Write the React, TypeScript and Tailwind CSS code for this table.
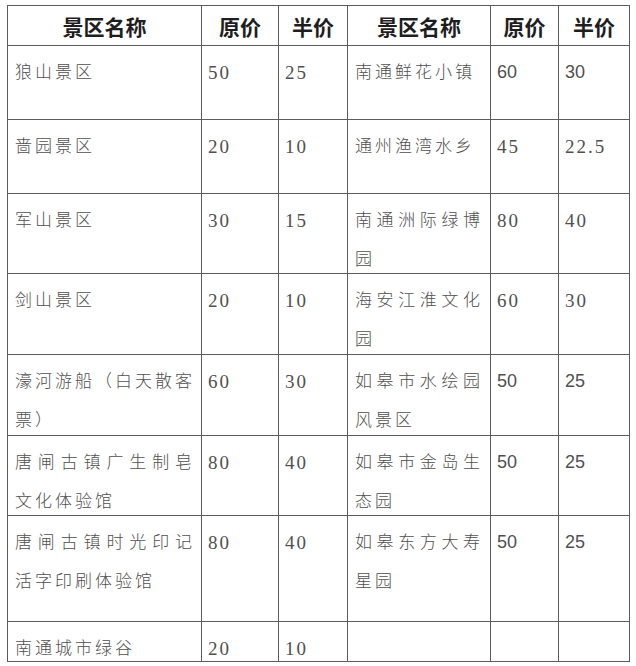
type Cell = { lines: string[]; a: string; b: string; sans?: boolean };

const rows: { h: number; left: Cell; right: Cell | null }[] = [
  { h: 74, left: { lines: ["狼山景区"], a: "50", b: "25" }, right: { lines: ["南通鲜花小镇"], a: "60", b: "30", sans: true } },
  { h: 74, left: { lines: ["啬园景区"], a: "20", b: "10" }, right: { lines: ["通州渔湾水乡"], a: "45", b: "22.5" } },
  { h: 80, left: { lines: ["军山景区"], a: "30", b: "15" }, right: { lines: ["南通洲际绿博", "园"], a: "80", b: "40" } },
  { h: 81, left: { lines: ["剑山景区"], a: "20", b: "10" }, right: { lines: ["海安江淮文化", "园"], a: "60", b: "30" } },
  { h: 81, left: { lines: ["濠河游船（白天散客", "票）"], a: "60", b: "30" }, right: { lines: ["如皋市水绘园", "风景区"], a: "50", b: "25", sans: true } },
  { h: 80, left: { lines: ["唐闸古镇广生制皂", "文化体验馆"], a: "80", b: "40" }, right: { lines: ["如皋市金岛生", "态园"], a: "50", b: "25", sans: true } },
  { h: 106, left: { lines: ["唐闸古镇时光印记", "活字印刷体验馆"], a: "80", b: "40" }, right: { lines: ["如皋东方大寿", "星园"], a: "50", b: "25", sans: true } },
  { h: 40, left: { lines: ["南通城市绿谷"], a: "20", b: "10" }, right: null },
];

const td = "border border-[#5c5c5c] align-top text-[#505050] text-[17px] tracking-[3px] p-0";
const serif = "font-['Liberation_Serif','Noto_Sans_CJK_SC',serif] font-light";
const sansNum = "font-['Liberation_Sans',sans-serif] tracking-normal text-[18px]";

// cell content is kept short (h-[24px]) so the row keeps its own height; text overflows downward
function Name({ lines, wide }: { lines: string[]; wide: boolean }) {
  return (
    <div className="h-[24px] pl-[7px] pt-[7px] leading-[39px]">
      {lines.map((l, i) =>
        i < lines.length - 1 ? (
          <div key={i} className={`${wide ? "w-[180px]" : "w-[128px]"} text-justify [text-align-last:justify]`}>
            {l}
          </div>
        ) : (
          <div key={i} className="whitespace-nowrap">{l}</div>
        )
      )}
    </div>
  );
}

function Num({ v, sans }: { v: string; sans?: boolean }) {
  return (
    <div className={`h-[24px] pt-[7px] leading-[39px] pl-[6px] ${sans ? sansNum : "text-[19px] tracking-[2px]"}`}>
      {v}
    </div>
  );
}

export default function App() {
  const th = "border border-[#5c5c5c] text-center align-middle pt-[3px] text-[21px] font-bold text-[#1e1e1e] font-['Noto_Sans_CJK_SC',sans-serif]";
  return (
    <div className="bg-white w-[636px] h-[666px] pl-[7px] pt-[5px]">
      <table className={`border-collapse table-fixed w-[623px] ${serif}`}>
        <colgroup>
          <col className="w-[194px]" />
          <col className="w-[77px]" />
          <col className="w-[69px]" />
          <col className="w-[143px]" />
          <col className="w-[68px]" />
          <col className="w-[71px]" />
        </colgroup>
        <thead>
          <tr className="h-[40px]">
            <th className={th}>景区名称</th>
            <th className={th}>原价</th>
            <th className={th}>半价</th>
            <th className={th}>景区名称</th>
            <th className={th}>原价</th>
            <th className={th}>半价</th>
          </tr>
        </thead>
        <tbody>
          {rows.map((r, i) => (
            <tr key={i} style={{ height: r.h }}>
              <td className={td}>
                <Name lines={r.left.lines} wide />
              </td>
              <td className={td}>
                <Num v={r.left.a} />
              </td>
              <td className={td}>
                <Num v={r.left.b} />
              </td>
              <td className={td}>{r.right && <Name lines={r.right.lines} wide={false} />}</td>
              <td className={td}>{r.right && <Num v={r.right.a} sans={r.right.sans} />}</td>
              <td className={td}>{r.right && <Num v={r.right.b} sans={r.right.sans} />}</td>
            </tr>
          ))}
        </tbody>
      </table>
    </div>
  );
}
